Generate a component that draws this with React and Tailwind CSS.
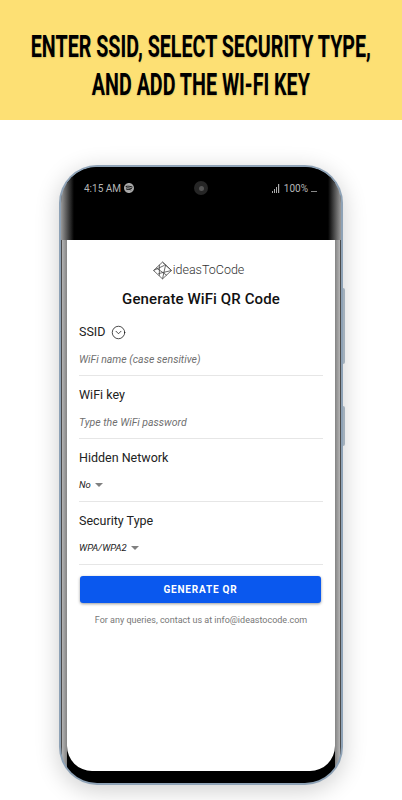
import { CircleChevronDown } from "lucide-react";
import { SiSpotify } from "react-icons/si";

function Logo() {
  return (
    <svg width="21" height="21" viewBox="0 0 20 20" fill="none" stroke="#444" strokeWidth="0.75">
      <path d="M10 2 L18.5 10 L10 18 L1.5 10 Z" />
      <path d="M1.5 10 L12 5 M4 7.5 L14 14.5 M7 4.5 L7 15 M13 4.5 L10 18 M10 2 L18.5 10 L6 13" />
    </svg>
  );
}

function SignalBars() {
  return (
    <svg width="9" height="9" viewBox="0 0 9 9" fill="#aaa">
      <rect x="0" y="7" width="1" height="2" />
      <rect x="2" y="5" width="1" height="4" />
      <rect x="4" y="3" width="1" height="6" />
      <rect x="6" y="0" width="1.2" height="9" />
    </svg>
  );
}

function Field({ label, icon, children }) {
  return (
    <div className="h-[63px] pt-[11px] border-b border-[#e6e6e6]">
      <div className="flex items-center h-4 text-[12.5px] leading-4 text-[#222]">
        {label}
        {icon}
      </div>
      <div className="mt-[13px] h-[14px] flex items-center">{children}</div>
    </div>
  );
}

function Placeholder({ children }) {
  return <span className="text-[10.5px] leading-[14px] italic text-[#6f6f6f]">{children}</span>;
}

function Select({ value }) {
  return (
    <div className="flex items-center gap-[4px] -translate-y-px">
      <span className="text-[9.5px] leading-[14px] italic text-[#222]">{value}</span>
      <span className="w-0 h-0 border-x-[4px] border-x-transparent border-t-[4px] border-t-[#808080]" />
    </div>
  );
}

export default function App() {
  return (
    <div className="w-[402px] h-[800px] bg-white overflow-hidden font-['Roboto',sans-serif]">
      <div className="h-[120px] pt-[11px] bg-[#fde074] flex flex-col items-center justify-center">
        <h1 className="font-bold text-[31px] leading-[38px] text-center text-black whitespace-nowrap scale-x-[0.635] [text-shadow:0_1px_2px_rgba(0,0,0,0.15)]">
          ENTER SSID, SELECT SECURITY TYPE,
          <br />
          AND ADD THE WI-FI KEY
        </h1>
      </div>

      <div className="relative mt-[45px] ml-[59px] w-[284px] h-[620px] rounded-[38px] bg-[#8ea2b6] p-[2px] shadow-[0_5px_24px_rgba(0,0,0,0.2)]">
        <div className="absolute right-[-2px] top-[123px] w-[2px] h-[76px] rounded-r-sm bg-[#a3afba]" />
        <div className="absolute right-[-2px] top-[241px] w-[2px] h-[40px] rounded-r-sm bg-[#a3afba]" />

        <div className="h-full flex flex-col rounded-[36px] overflow-hidden bg-[linear-gradient(90deg,#4a4a4a_0,#4a4a4a_1px,#b4b4b4_1px,#848484_6px,#000_6px,#000_calc(100%-6px),#848484_calc(100%-6px),#b4b4b4_calc(100%-1px),#4a4a4a_calc(100%-1px),#4a4a4a_100%)]">
          <div className="h-[73px] bg-[linear-gradient(90deg,#9a9a9a_0,#000_13px,#000_calc(100%-13px),#9a9a9a_100%)] flex items-start justify-between pl-[23px] pr-[24px] pt-[14px]">
            <div className="flex items-center gap-[3px] h-[14px] text-[10px] text-[#b5b5b5]">
              4:15 AM
              <SiSpotify size={10} color="#a8a8a8" />
            </div>
            <div className="flex items-center gap-[3px] h-[14px] text-[10px] text-[#b5b5b5]">
              <SignalBars />
              100%
              <span className="w-[6px] h-[7px] border-b border-[#888]" />
            </div>
          </div>

          <div className="flex-1 mx-[6px] bg-white rounded-b-[25px] px-[12px] pt-[20px]">
            <div className="flex items-center justify-center h-5 pr-[6px]">
              <Logo />
              <span className="text-[12.5px] font-light text-[#333]">ideasToCode</span>
            </div>
            <h2 className="mt-[9px] mb-[4px] text-center text-[15px] tracking-[0.1px] leading-5 font-medium text-[#111]">
              Generate WiFi QR Code
            </h2>

            <Field label="SSID" icon={<CircleChevronDown size={15} strokeWidth={1.2} color="#111" className="ml-[6px]" />}>
              <Placeholder>WiFi name (case sensitive)</Placeholder>
            </Field>
            <Field label="WiFi key">
              <Placeholder>Type the WiFi password</Placeholder>
            </Field>
            <Field label="Hidden Network">
              <Select value="No" />
            </Field>
            <Field label="Security Type">
              <Select value="WPA/WPA2" />
            </Field>

            <button className="mt-[11px] ml-px mr-[2px] w-[241px] h-[27px] rounded-[3px] bg-[#0a58ee] text-white text-[10px] font-bold tracking-[0.8px] shadow-[0_1px_3px_rgba(0,0,0,0.4)]">
              GENERATE QR
            </button>
            <p className="mt-[10px] text-center text-[9px] leading-[14px] text-[#777]">
              For any queries, contact us at info@ideastocode.com
            </p>
          </div>
          <div className="h-[12px]" />
        </div>

        <div className="absolute top-[16px] left-[135px] w-[14px] h-[14px] rounded-full bg-[#262626] flex items-center justify-center">
          <div className="w-[5px] h-[5px] rounded-full bg-[#555]" />
        </div>
      </div>
    </div>
  );
}
